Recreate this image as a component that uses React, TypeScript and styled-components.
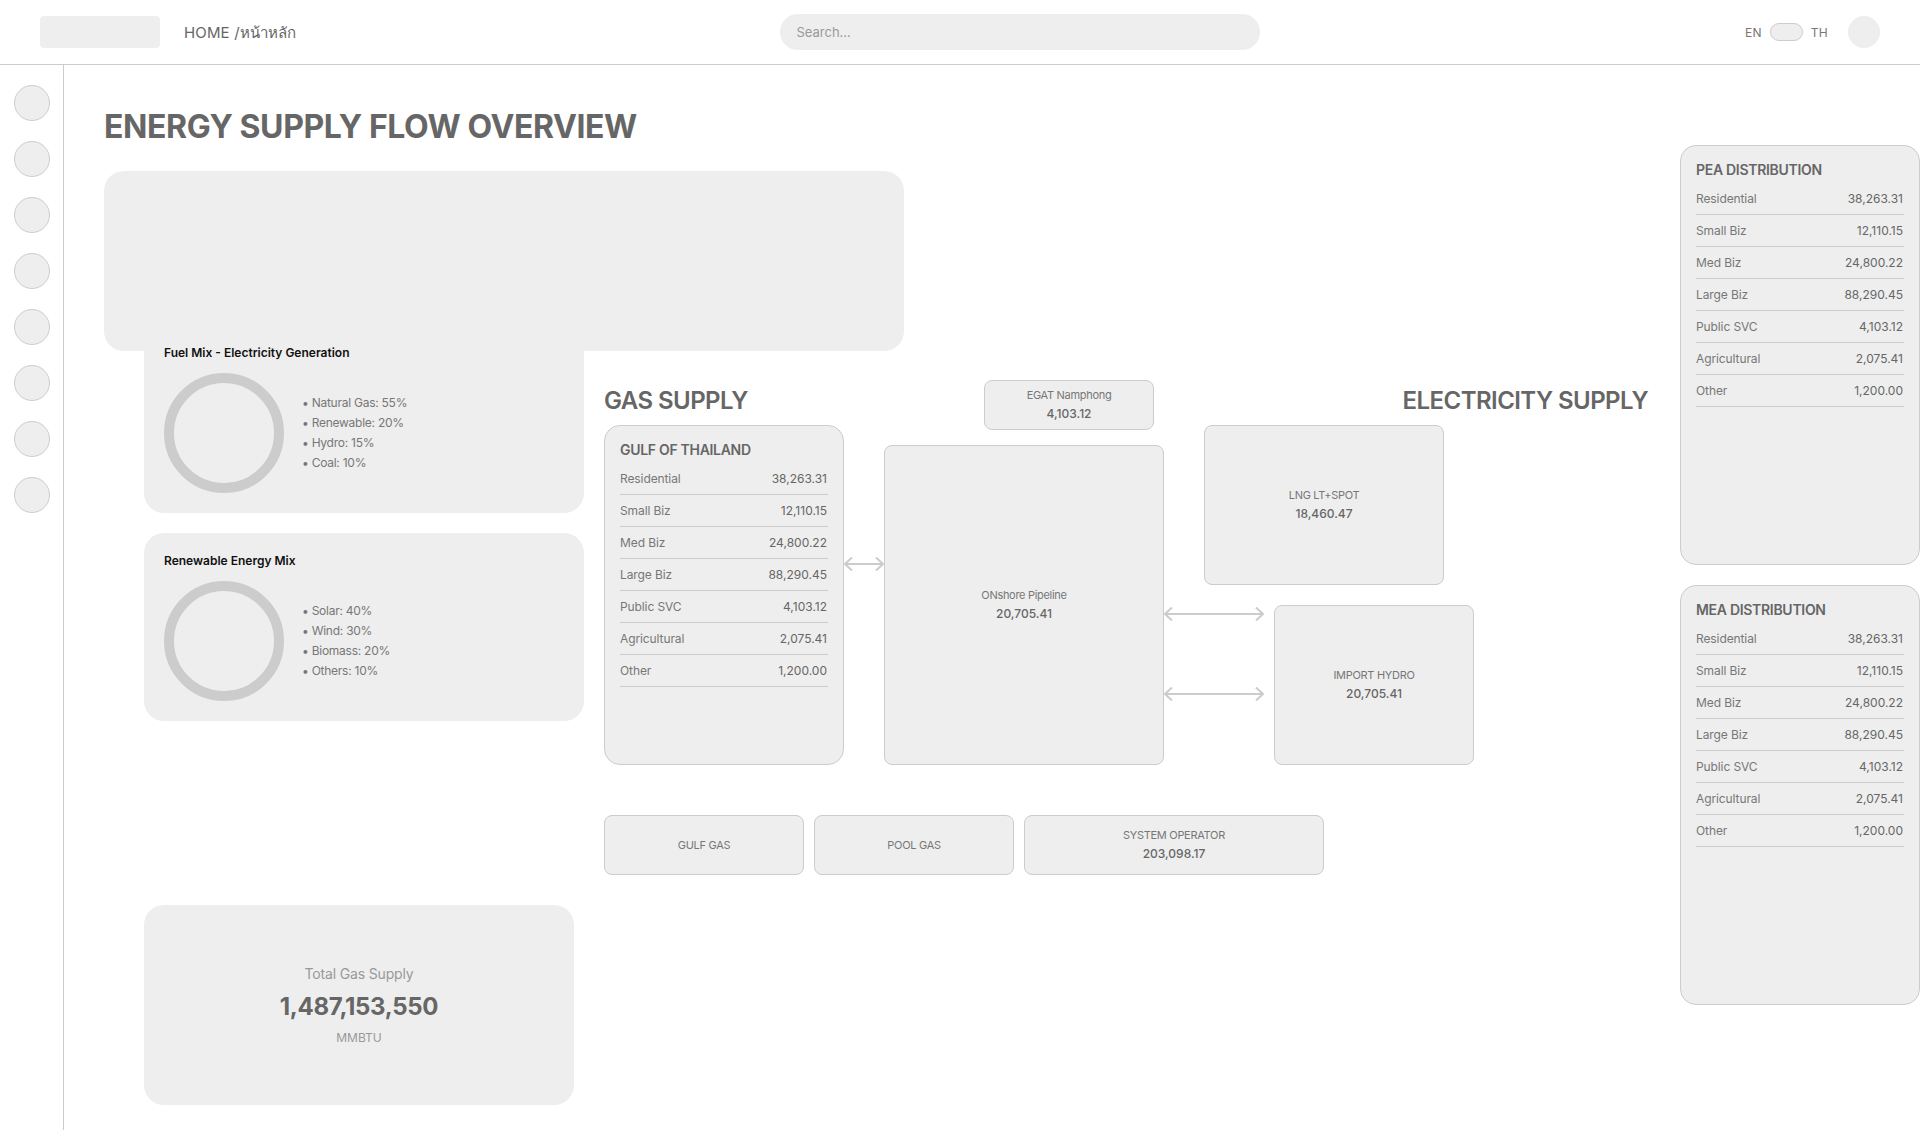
import React from 'react';
import styled, { createGlobalStyle } from 'styled-components';

const GlobalStyle = createGlobalStyle`
  * { box-sizing: border-box; }
  body {
    margin: 0;
    background: #fff;
    font-family: Inter, 'Noto Sans', 'Liberation Sans', sans-serif;
    color: #666;
  }
`;

const Page = styled.div`
  width: 1920px;
  min-height: 1130px;
  display: flex;
  flex-direction: column;
  overflow: hidden;
`;

const Header = styled.header`
  height: 65px;
  flex: none;
  display: flex;
  align-items: center;
  justify-content: space-between;
  padding: 0 40px;
  border-bottom: 1px solid #ccc;
`;

const HeaderLeft = styled.div`
  display: flex;
  align-items: center;
  gap: 24px;
  width: 256px;
`;

const Logo = styled.div`
  width: 120px;
  height: 32px;
  flex: none;
  background: #eee;
  border-radius: 4px;
`;

const Crumb = styled.span`
  font-size: 15px;
  line-height: 20px;
  padding-top: 1px;
  letter-spacing: 0.15px;
  white-space: nowrap;
  color: #666;
`;

const Search = styled.input`
  width: 480px;
  height: 36px;
  border: none;
  outline: none;
  border-radius: 18px;
  background: #eee;
  padding: 0 16px;
  font-family: inherit;
  font-size: 13px;
  &::placeholder { color: #999; opacity: 1; }
`;

const HeaderRight = styled.div`
  display: flex;
  align-items: center;
  gap: 8px;
  font-size: 12px;
  letter-spacing: 0.3px;
  color: #777;
`;

const Toggle = styled.div`
  width: 33px;
  height: 18px;
  border-radius: 9px;
  background: #eee;
  border: 1px solid #ccc;
`;

const Avatar = styled.div`
  width: 32px;
  height: 32px;
  margin-left: 12px;
  border-radius: 50%;
  background: #eee;
`;

const Shell = styled.div`
  flex: 1;
  display: flex;
`;

const Sidebar = styled.nav`
  width: 64px;
  flex: none;
  border-right: 1px solid #ccc;
  padding: 20px 0 0 14px;
  display: flex;
  flex-direction: column;
  gap: 20px;
`;

const NavDot = styled.div`
  width: 36px;
  height: 36px;
  border-radius: 50%;
  background: #eee;
  border: 1px solid #ccc;
`;

const Main = styled.main`
  flex: 1;
  display: flex;
  padding-left: 40px;
`;

const Content = styled.div`
  width: 1576px;
  flex: none;
`;

const PageTitle = styled.h1`
  margin: 0 0 25px;
  padding-top: 42px;
  font-size: 32px;
  line-height: 39px;
  font-weight: 700;
  letter-spacing: -0.4px;
  color: #666;
  white-space: nowrap;
`;

const Hero = styled.div`
  width: 800px;
  height: 180px;
  background: #eee;
  border-radius: 20px;
`;

const Columns = styled.div`
  display: flex;
  gap: 20px;
  margin: -26px 0 0 40px;
`;

const LeftColumn = styled.div`
  width: 440px;
  flex: none;
  display: flex;
  flex-direction: column;
  gap: 20px;
`;

const MixCard = styled.section`
  background: #eee;
  border-radius: 20px;
  padding: 20px;
`;

const MixTitle = styled.h3`
  margin: 0 0 12px;
  font-size: 12px;
  line-height: 16px;
  font-weight: 600;
  color: #111;
`;

const MixBody = styled.div`
  display: flex;
  align-items: center;
  gap: 18px;
`;

const Ring = styled.div`
  width: 120px;
  height: 120px;
  border-radius: 50%;
  border: 10px solid #ccc;
`;

const Legend = styled.ul`
  margin: 0;
  padding: 0;
  list-style: none;
  font-size: 12px;
  line-height: 20px;
  letter-spacing: -0.25px;
  color: #777;
`;

const TotalCard = styled.section`
  width: 430px;
  height: 200px;
  margin-top: 164px;
  padding-top: 1px;
  background: #eee;
  border-radius: 20px;
  display: flex;
  flex-direction: column;
  align-items: center;
  justify-content: center;
`;

const TotalLabel = styled.div`
  font-size: 14px;
  line-height: 18px;
  letter-spacing: -0.15px;
  color: #999;
  margin-bottom: 8px;
`;

const TotalValue = styled.div`
  font-size: 24px;
  line-height: 32px;
  font-weight: 700;
  letter-spacing: -0.3px;
  color: #666;
  margin-bottom: 7px;
`;

const TotalUnit = styled.div`
  font-size: 12px;
  line-height: 16px;
  color: #999;
`;

const Flow = styled.div`
  margin-top: 55px;
  flex: none;
`;

const FlowRow = styled.div`
  display: flex;
  align-items: flex-start;
`;

const Stack = styled.div<{ $w?: number }>`
  display: flex;
  flex-direction: column;
  ${p => (p.$w ? `width: ${p.$w}px;` : '')}
`;

const SectionHeading = styled.h2<{ $right?: boolean }>`
  margin: 0 0 5px;
  height: 40px;
  font-size: 24px;
  line-height: 42px;
  font-weight: 600;
  letter-spacing: -0.55px;
  color: #666;
  white-space: nowrap;
  text-align: ${p => (p.$right ? 'right' : 'left')};
`;

const DataCard = styled.section<{ $height: number }>`
  width: 240px;
  height: ${p => p.$height}px;
  background: #eee;
  border: 1px solid #ccc;
  border-radius: 16px;
  padding: 14px 15px 0;
`;

const DataTitle = styled.h3`
  margin: 0 0 3px;
  font-size: 14px;
  line-height: 20px;
  font-weight: 600;
  letter-spacing: -0.3px;
  color: #666;
`;

const DataRow = styled.div`
  height: 32px;
  display: flex;
  align-items: center;
  justify-content: space-between;
  padding: 0 1px 0 0;
  border-bottom: 1px solid #ccc;
  font-size: 12px;
  color: #666;
`;

const DataLabel = styled.span`
  letter-spacing: -0.1px;
  color: #777;
`;

const Node = styled.div<{ $w: number; $h: number; $ml?: number; $mb?: number }>`
  width: ${p => p.$w}px;
  height: ${p => p.$h}px;
  margin-left: ${p => p.$ml ?? 0}px;
  margin-bottom: ${p => p.$mb ?? 0}px;
  flex: none;
  background: #eee;
  border: 1px solid #ccc;
  border-radius: 8px;
  display: flex;
  flex-direction: column;
  align-items: center;
  justify-content: center;
  gap: 4px;
`;

const NodeLabel = styled.div`
  font-size: 11px;
  line-height: 14px;
  letter-spacing: -0.3px;
  color: #777;
`;

const NodeValue = styled.div`
  font-size: 12px;
  line-height: 16px;
  font-weight: 500;
  color: #666;
`;

const ArrowSlot = styled.div<{ $w: number; $top: number }>`
  width: ${p => p.$w}px;
  flex: none;
  margin-top: ${p => p.$top}px;
  display: flex;
`;

const ArrowStack = styled.div`
  width: 110px;
  flex: none;
  padding-top: 2px;
  display: flex;
  flex-direction: column;
  gap: 66px;
`;

const ArrowIcon = styled.svg`
  display: block;
`;

const BottomRow = styled.div`
  display: flex;
  gap: 10px;
  margin-top: 50px;
`;

const RightColumn = styled.aside`
  width: 240px;
  flex: none;
  padding-top: 80px;
  display: flex;
  flex-direction: column;
  gap: 20px;
`;

const rows: [string, string][] = [
  ['Residential', '38,263.31'],
  ['Small Biz', '12,110.15'],
  ['Med Biz', '24,800.22'],
  ['Large Biz', '88,290.45'],
  ['Public SVC', '4,103.12'],
  ['Agricultural', '2,075.41'],
  ['Other', '1,200.00'],
];

const Arrow: React.FC<{ width: number }> = ({ width }) => (
  <ArrowIcon width={width} height={14} viewBox={`0 0 ${width} 14`} fill="none" stroke="#ccc" strokeWidth="2">
    <path d={`M1 7H${width - 1}M8 0.5L1 7L8 13.5M${width - 8} 0.5L${width - 1} 7L${width - 8} 13.5`} />
  </ArrowIcon>
);

const Distribution: React.FC<{ title: string; height: number }> = ({ title, height }) => (
  <DataCard $height={height}>
    <DataTitle>{title}</DataTitle>
    {rows.map(([label, value]) => (
      <DataRow key={label}>
        <DataLabel>{label}</DataLabel>
        <span>{value}</span>
      </DataRow>
    ))}
  </DataCard>
);

const Mix: React.FC<{ title: string; items: string[] }> = ({ title, items }) => (
  <MixCard>
    <MixTitle>{title}</MixTitle>
    <MixBody>
      <Ring />
      <Legend>
        {items.map(item => <li key={item}>• {item}</li>)}
      </Legend>
    </MixBody>
  </MixCard>
);

export default function App() {
  return (
    <Page>
      <GlobalStyle />
      <Header>
        <HeaderLeft>
          <Logo />
          <Crumb>HOME /หน้าหลัก</Crumb>
        </HeaderLeft>
        <Search placeholder="Search..." />
        <HeaderRight>
          <span>EN</span>
          <Toggle />
          <span>TH</span>
          <Avatar />
        </HeaderRight>
      </Header>
      <Shell>
        <Sidebar>
          {Array.from({ length: 8 }, (_, i) => <NavDot key={i} />)}
        </Sidebar>
        <Main>
          <Content>
            <PageTitle>ENERGY SUPPLY FLOW OVERVIEW</PageTitle>
            <Hero />
            <Columns>
              <LeftColumn>
                <Mix title="Fuel Mix - Electricity Generation" items={['Natural Gas: 55%', 'Renewable: 20%', 'Hydro: 15%', 'Coal: 10%']} />
                <Mix title="Renewable Energy Mix" items={['Solar: 40%', 'Wind: 30%', 'Biomass: 20%', 'Others: 10%']} />
                <TotalCard>
                  <TotalLabel>Total Gas Supply</TotalLabel>
                  <TotalValue>1,487,153,550</TotalValue>
                  <TotalUnit>MMBTU</TotalUnit>
                </TotalCard>
              </LeftColumn>
              <Flow>
                <FlowRow>
                  <Stack>
                    <SectionHeading>GAS SUPPLY</SectionHeading>
                    <Distribution title="GULF OF THAILAND" height={340} />
                  </Stack>
                  <ArrowSlot $w={40} $top={177}><Arrow width={40} /></ArrowSlot>
                  <Stack>
                    <Node $w={170} $h={50} $ml={100} $mb={15}>
                      <NodeLabel>EGAT Namphong</NodeLabel>
                      <NodeValue>4,103.12</NodeValue>
                    </Node>
                    <Node $w={280} $h={320}>
                      <NodeLabel>ONshore Pipeline</NodeLabel>
                      <NodeValue>20,705.41</NodeValue>
                    </Node>
                  </Stack>
                  <Stack $w={484}>
                    <SectionHeading $right>ELECTRICITY SUPPLY</SectionHeading>
                    <Node $w={240} $h={160} $ml={40} $mb={20}>
                      <NodeLabel>LNG LT+SPOT</NodeLabel>
                      <NodeValue>18,460.47</NodeValue>
                    </Node>
                    <FlowRow>
                      <ArrowStack>
                        <Arrow width={100} />
                        <Arrow width={100} />
                      </ArrowStack>
                      <Node $w={200} $h={160}>
                        <NodeLabel>IMPORT HYDRO</NodeLabel>
                        <NodeValue>20,705.41</NodeValue>
                      </Node>
                    </FlowRow>
                  </Stack>
                </FlowRow>
                <BottomRow>
                  <Node $w={200} $h={60}><NodeLabel>GULF GAS</NodeLabel></Node>
                  <Node $w={200} $h={60}><NodeLabel>POOL GAS</NodeLabel></Node>
                  <Node $w={300} $h={60}>
                    <NodeLabel>SYSTEM OPERATOR</NodeLabel>
                    <NodeValue>203,098.17</NodeValue>
                  </Node>
                </BottomRow>
              </Flow>
            </Columns>
          </Content>
          <RightColumn>
            <Distribution title="PEA DISTRIBUTION" height={420} />
            <Distribution title="MEA DISTRIBUTION" height={420} />
          </RightColumn>
        </Main>
      </Shell>
    </Page>
  );
}
